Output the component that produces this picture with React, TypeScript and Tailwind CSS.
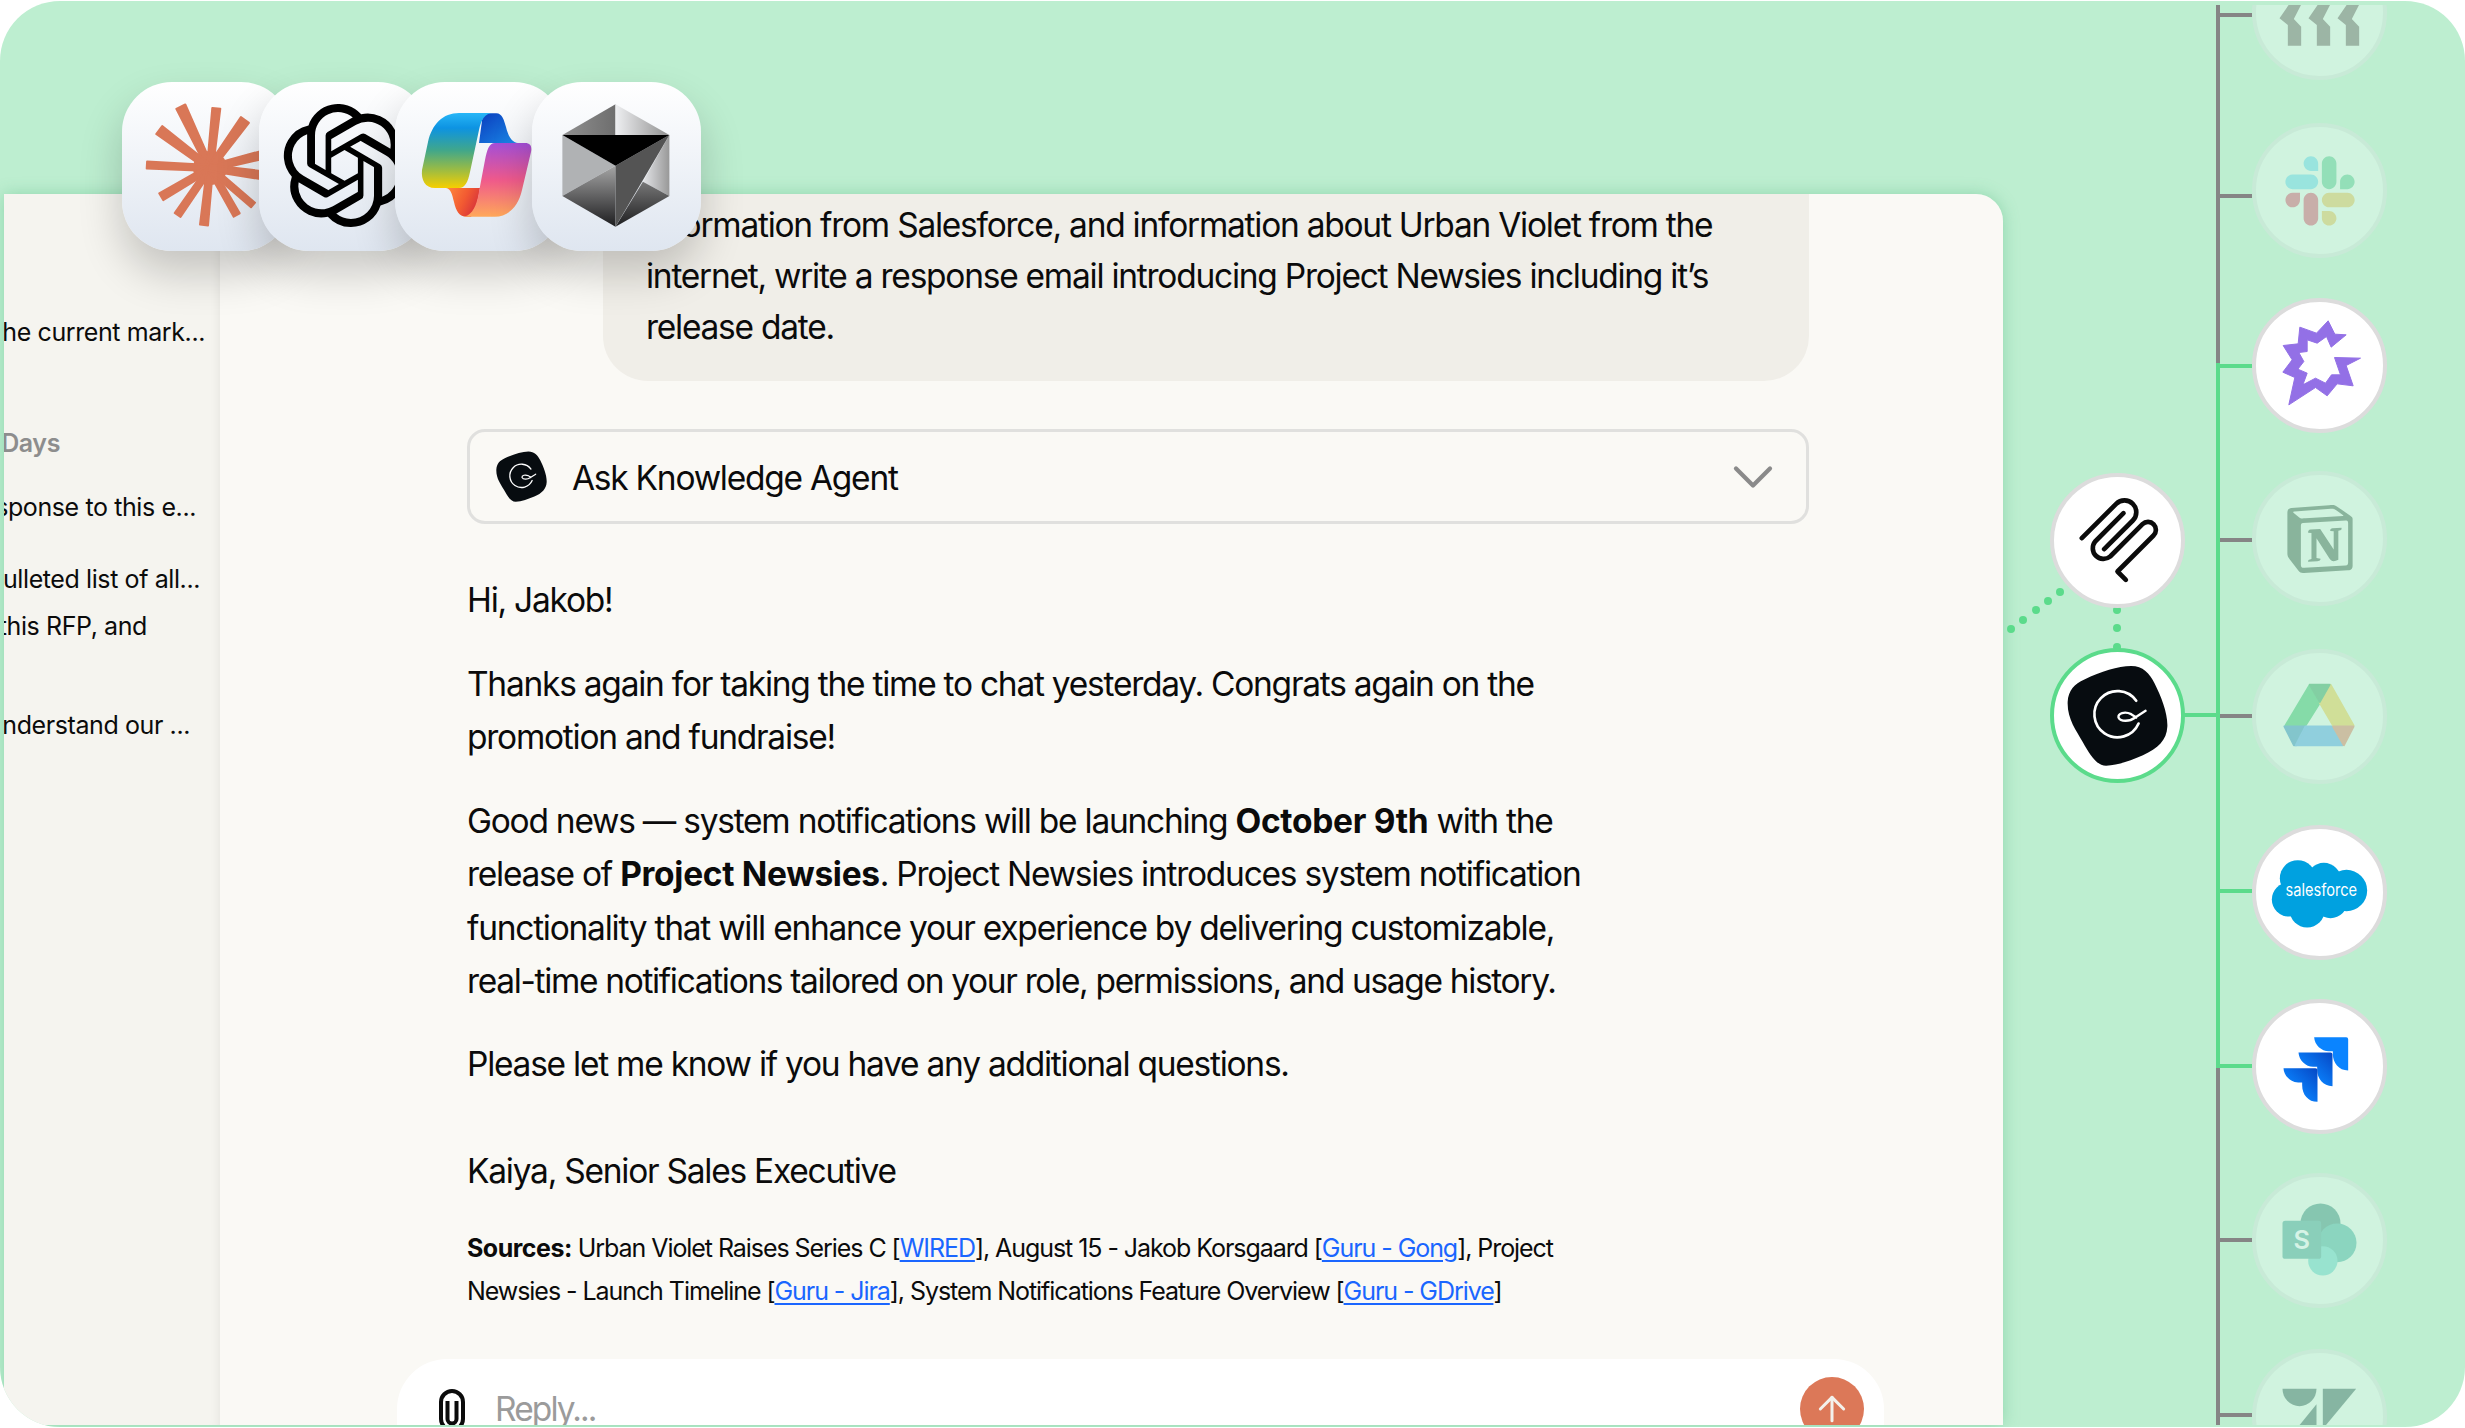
import { ArrowUp, ChevronDown } from "lucide-react";
import { SiNotion, SiOpenai } from "react-icons/si";
import type { ReactNode } from "react";

const font = { fontFamily: "Inter, 'Liberation Sans', sans-serif" };

const rays: [number, number, number][] = [
  [58.8, 24.7, 10], [94.3, 26.3, 8], [122.9, 38, 10], [37.2, 48, 10], [24.9, 83, 7], [39.2, 114.7, 8],
  [55.6, 133, 7], [82, 143, 8], [114.7, 133, 7], [131, 123, 6], [160, 68, 9], [160, 96, 9],
];
const cx = 88;
const cy = 86;
function rayPath(x: number, y: number, w: number) {
  const dx = x - cx;
  const dy = y - cy;
  const l = Math.hypot(dx, dy);
  const nx = -dy / l;
  const ny = dx / l;
  const f = (v: number) => v.toFixed(1);
  return `M${f(cx + nx * 3)} ${f(cy + ny * 3)} L${f(x + (nx * w) / 2)} ${f(y + (ny * w) / 2)} L${f(x - (nx * w) / 2)} ${f(y - (ny * w) / 2)} L${f(cx - nx * 3)} ${f(cy - ny * 3)}Z`;
}

function Tile({ children, first }: { children: ReactNode; first?: boolean }) {
  return (
    <div
      className={`relative h-[169px] w-[169px] shrink-0 overflow-hidden rounded-[50px] bg-linear-to-b from-white to-[#dfe6f0] shadow-[0_22px_44px_rgba(0,0,0,0.2)] ${first ? "" : "-ml-[32.5px]"}`}
    >
      {children}
    </div>
  );
}

function GuruLogo({ className }: { className: string }) {
  return (
    <svg viewBox="318 615 302 302" className={className}>
      <path
        d="M320 725C322 690 340 672 370 658C420 635 470 618 510 618C545 618 565 640 580 670C600 710 620 760 618 800C616 840 590 865 545 885C510 900 470 915 435 916C405 916 385 880 365 845C345 810 318 775 320 725Z"
        fill="#070c10"
      />
      <path d="M525 722A69 69 0 1 0 532 790" fill="none" stroke="#fff" strokeWidth="8" strokeLinecap="round" />
      <path d="M553 752L522 772C505 785 478 785 472 772C470 760 490 752 510 762L525 772" fill="none" stroke="#fff" strokeWidth="7" strokeLinecap="round" />
    </svg>
  );
}

function Node({ faded, green, className, children }: { faded?: boolean; green?: boolean; className: string; children: ReactNode }) {
  const tone = green ? "bg-white border-[#5bdb8b]" : faded ? "bg-[#d0f3df] border-[#c8ead7]" : "bg-white border-[#dcdcdc]";
  return (
    <div className={`absolute flex h-[135px] w-[135px] items-center justify-center rounded-full border-4 ${tone} ${className}`}>{children}</div>
  );
}

function Dot({ className }: { className: string }) {
  return <div className={`absolute h-[8px] w-[8px] rounded-full bg-[#5bdb8b] ${className}`} />;
}

const link = "text-[#1a66ff] underline underline-offset-[3px] decoration-[1.5px]";

export default function App() {
  return (
    <div className="h-[1428px] w-[2465px] overflow-hidden bg-white pt-[1px] text-[#0b0b0b]" style={font}>
      <div className="relative h-[1426px] w-full overflow-hidden rounded-[60px] bg-[#bdeed0] pb-[2px] pl-[4px] pt-[193px]">
        {/* App window */}
        <div className="flex h-[1231px] w-[1999px] overflow-hidden rounded-tr-[27px] shadow-[0_0_16px_rgba(60,170,110,0.35)]">
          {/* Sidebar */}
          <div className="flex w-[216px] shrink-0 flex-col overflow-hidden bg-[#f5f4ef] pt-[121px] text-[25px] leading-[34px] tracking-[-0.4px] shadow-[inset_-10px_0_12px_-10px_rgba(0,0,0,0.08)] whitespace-nowrap">
            <div className="flex justify-end pr-[15px]">Summarize the current mark...</div>
            <div className="mt-[77px] flex justify-end pr-[160px] font-semibold text-[#8d8d8d]">Previous 7 Days</div>
            <div className="mt-[30px] flex justify-end pr-[24px]">Draft a response to this e...</div>
            <div className="mt-[38px] flex justify-end pr-[20px]">Create a bulleted list of all...</div>
            <div className="mt-[13px] flex justify-end pr-[73px]">Summarize this RFP, and</div>
            <div className="mt-[65px] flex justify-end pr-[30px]">Help me understand our ...</div>
          </div>
          {/* Main */}
          <div className="flex min-w-0 flex-1 flex-col overflow-hidden bg-[#faf9f5] pl-[247px]">
            <div className="ml-[136px] h-[187px] w-[1206px] shrink-0 rounded-b-[45px] bg-[#f0eee8] pl-[43px] pt-[6px] text-[33.5px] leading-[51px] tracking-[-1.25px] whitespace-nowrap">
              information from Salesforce, and information about Urban Violet from the
              <br />
              internet, write a response email introducing Project Newsies including it’s
              <br />
              release date.
            </div>
            <div className="mt-[48px] flex h-[95px] w-[1342px] shrink-0 items-center rounded-[18px] border-[3px] border-[#e0e0de] pl-[26px] pr-[19px]">
              <GuruLogo className="h-[51px] w-[51px]" />
              <span className="ml-[25px] flex-1 pt-[3px] text-[33.5px] tracking-[-1.25px]">Ask Knowledge Agent</span>
              <ChevronDown size={68} strokeWidth={1.5} className="text-[#8a8a8a]" />
            </div>
            <div className="mt-[50px] text-[33.5px] leading-[53.5px] tracking-[-1.25px] whitespace-nowrap">
              <p>Hi, Jakob!</p>
              <p className="mt-[30px]">
                Thanks again for taking the time to chat yesterday. Congrats again on the
                <br />
                promotion and fundraise!
              </p>
              <p className="mt-[30px]">
                Good news — system notifications will be launching <b className="font-bold tracking-[-0.3px]">October 9th</b> with the
                <br />
                release of <b className="font-bold tracking-[-0.3px]">Project Newsies</b>. Project Newsies introduces system notification
                <br />
                functionality that will enhance your experience by delivering customizable,
                <br />
                <span className="tracking-[-1.34px]">real-time notifications tailored on your role, permissions, and usage history.</span>
              </p>
              <p className="mt-[29px]">Please let me know if you have any additional questions.</p>
              <p className="mt-[54px]">Kaiya, Senior Sales Executive</p>
            </div>
            <div className="mt-[28px] text-[25px] leading-[43px] tracking-[-1.06px] whitespace-nowrap">
              <b className="font-bold tracking-[-0.5px]">Sources:</b> Urban Violet Raises Series C [<span className={link}>WIRED</span>], August 15 - Jakob Korsgaard [
              <span className={link}>Guru - Gong</span>], Project
              <br />
              Newsies - Launch Timeline [<span className={link}>Guru - Jira</span>], System Notifications Feature Overview [
              <span className={link}>Guru - GDrive</span>]
            </div>
            <div className="-ml-[70px] mt-[46px] flex h-[120px] w-[1487px] shrink-0 items-start rounded-[50px] bg-white pl-[41px] pr-[20px] pt-[18px]">
              <svg viewBox="0 0 28 48" className="mt-[12px] h-[48px] w-[28px]" fill="none" stroke="#0b0b0b" strokeWidth="4">
                <path d="M3 13a11 11 0 0 1 22 0V30a11 11 0 0 1-22 0Z" />
                <path d="M9.5 12V30a4.5 4.5 0 0 0 9 0V12" />
              </svg>
              <span className="ml-[29px] mt-[9px] flex-1 text-[33.5px] leading-[46px] tracking-[-1.9px] text-[#9b9b9b]">Reply...</span>
              <div className="flex h-[64px] w-[64px] items-center justify-center rounded-full bg-[#dc7858]">
                <ArrowUp size={40} strokeWidth={1.8} className="text-[#f3f1ec]" />
              </div>
            </div>
          </div>
        </div>

        {/* Model tiles */}
        <div className="absolute left-[122px] top-[81px] flex">
          <Tile first>
            <svg viewBox="0 0 169 169" className="h-full w-full">
              <circle cx={cx} cy={cy} r="17" fill="#d97757" />
              {rays.map(([x, y, w]) => (
                <path key={`${x}-${y}`} d={rayPath(x, y, w)} fill="#d97757" stroke="#d97757" strokeWidth="2" strokeLinejoin="round" />
              ))}
            </svg>
          </Tile>
          <Tile>
            <div className="absolute left-[24px] top-[22px]">
              <SiOpenai size={123} color="#000" />
            </div>
          </Tile>
          <Tile>
            <svg viewBox="0 0 169 169" className="h-full w-full">
              <defs>
                <linearGradient id="cpA" x1="0" y1="0" x2="0" y2="1">
                  <stop offset="0" stopColor="#27b6f7" />
                  <stop offset="0.2" stopColor="#0d93e2" />
                  <stop offset="0.5" stopColor="#41a78a" />
                  <stop offset="0.75" stopColor="#99bb45" />
                  <stop offset="1" stopColor="#f6cf00" />
                </linearGradient>
                <linearGradient id="cpB" x1="0" y1="0" x2="1" y2="1">
                  <stop offset="0" stopColor="#0a3cbd" />
                  <stop offset="1" stopColor="#1b8ae8" />
                </linearGradient>
                <linearGradient id="cpC" x1="0" y1="0" x2="0" y2="1">
                  <stop offset="0" stopColor="#a44fd8" />
                  <stop offset="0.5" stopColor="#f05a8c" />
                  <stop offset="1" stopColor="#ffa85a" />
                </linearGradient>
                <linearGradient id="cpD" x1="0" y1="0" x2="1" y2="0.4">
                  <stop offset="0" stopColor="#ff8a3a" />
                  <stop offset="0.6" stopColor="#f25a32" />
                  <stop offset="1" stopColor="#d9353a" />
                </linearGradient>
              </defs>
              <path d="M88 31.3H101C107 31 109 38 111 45C113 53 116 60 123 61H84Z" fill="url(#cpB)" />
              <path d="M51 106H72L85 106L84 112C82 122 80 130 76 134.7H72C64 134.7 61 129 59 120C57 112 56 107 51 106Z" fill="url(#cpD)" />
              <path d="M64 31H98C90 31 86 38 84 48L75 90C73 100 70 106 64 106H40C30 106 26 98 27 88L33 60C37 42 48 31 64 31Z" fill="url(#cpA)" />
              <path d="M100 61H130C136 61 137 65 136 70L127 108C123 126 112 134.7 100 134.7H68C75 134 80 128 83 115L90 78C92 68 94 61 100 61Z" fill="url(#cpC)" />
            </svg>
          </Tile>
          <Tile>
            <svg viewBox="0 0 169 169" className="h-full w-full">
              <defs>
                <linearGradient id="gA" x1="0" y1="0" x2="1" y2="0">
                  <stop offset="0" stopColor="#909090" />
                  <stop offset="1" stopColor="#6e6e6e" />
                </linearGradient>
                <linearGradient id="gB" x1="0" y1="0" x2="1" y2="0">
                  <stop offset="0" stopColor="#eeeff1" />
                  <stop offset="1" stopColor="#8f8f8f" />
                </linearGradient>
                <linearGradient id="gC" x1="0" y1="0" x2="0" y2="1">
                  <stop offset="0" stopColor="#a5a5a5" />
                  <stop offset="1" stopColor="#1d1d1f" />
                </linearGradient>
                <linearGradient id="gD" x1="0" y1="0" x2="1" y2="0">
                  <stop offset="0" stopColor="#e4e5e8" />
                  <stop offset="1" stopColor="#989898" />
                </linearGradient>
                <linearGradient id="gE" x1="0" y1="0" x2="0" y2="1">
                  <stop offset="0" stopColor="#777" />
                  <stop offset="1" stopColor="#1e1e20" />
                </linearGradient>
              </defs>
              <polygon points="83.5,22.3 30.4,53 83.5,53" fill="url(#gA)" />
              <polygon points="83.5,22.3 137.4,53 83.5,53" fill="url(#gB)" />
              <polygon points="30.4,53 83.5,83.7 30.4,114" fill="#b0b2b4" />
              <polygon points="30.4,114 83.5,83.7 83.5,144.7" fill="url(#gC)" />
              <polygon points="137.4,53 110.9,99.7 137.4,114" fill="url(#gD)" />
              <polygon points="110.9,99.7 137.4,114 83.5,144.7" fill="url(#gE)" />
              <polygon points="83.5,83.7 137.4,53 83.5,144.7" fill="#545454" />
              <polygon points="30.4,53 137.4,53 83.5,83.7" fill="#000" />
            </svg>
          </Tile>
        </div>

        {/* Integration tree */}
        <div className="absolute bottom-[2px] left-0 right-0 top-[4px] overflow-hidden">
          <div className="absolute left-[2216px] top-0 h-[358px] w-[4px] bg-[#858585]" />
          <div className="absolute left-[2216px] top-[358px] h-[705px] w-[4px] bg-[#5bdb8b]" />
          <div className="absolute left-[2216px] top-[1063px] h-[358px] w-[4px] bg-[#858585]" />

          <div className="absolute left-[2220px] top-[8px] h-[4px] w-[32px] bg-[#858585]" />
          <div className="absolute left-[2220px] top-[189px] h-[4px] w-[32px] bg-[#858585]" />
          <div className="absolute left-[2216px] top-[359px] h-[4px] w-[36px] bg-[#5bdb8b]" />
          <div className="absolute left-[2220px] top-[533px] h-[4px] w-[32px] bg-[#858585]" />
          <div className="absolute left-[2220px] top-[709px] h-[4px] w-[32px] bg-[#858585]" />
          <div className="absolute left-[2216px] top-[884px] h-[4px] w-[36px] bg-[#5bdb8b]" />
          <div className="absolute left-[2216px] top-[1059px] h-[4px] w-[36px] bg-[#5bdb8b]" />
          <div className="absolute left-[2220px] top-[1233px] h-[4px] w-[32px] bg-[#858585]" />
          <div className="absolute left-[2220px] top-[1408px] h-[4px] w-[32px] bg-[#858585]" />
          <div className="absolute left-[2184px] top-[708px] h-[4px] w-[32px] bg-[#5bdb8b]" />

          <Dot className="left-[2007px] top-[620px]" />
          <Dot className="left-[2019px] top-[611px]" />
          <Dot className="left-[2032px] top-[601px]" />
          <Dot className="left-[2044px] top-[592px]" />
          <Dot className="left-[2056px] top-[583px]" />
          <Dot className="left-[2113px] top-[601px]" />
          <Dot className="left-[2113px] top-[619px]" />
          <Dot className="left-[2113px] top-[638px]" />

          {/* Chevrons */}
          <Node faded className="left-[2252px] top-[-60px]">
            <svg viewBox="886.5 -153 381 381" className="h-[127px] w-[127px]" fill="#9cb5a5">
              <path d="M1022 14H985L957 55L982 75V137H1022V80L1000 57Z" />
              <path d="M1109 14H1072L1044 55L1069 75V137H1109V80L1087 57Z" />
              <path d="M1196 14H1159L1131 55L1156 75V137H1196V80L1174 57Z" />
            </svg>
          </Node>
          {/* Slack */}
          <Node faded className="left-[2252px] top-[118px]">
            <svg viewBox="0 0 127 127" className="h-[70px] w-[70px]">
              <path fill="#c8aea9" d="M27.2 80c0 7.3-5.9 13.2-13.2 13.2C6.7 93.2.8 87.3.8 80c0-7.3 5.9-13.2 13.2-13.2h13.2V80zm6.6 0c0-7.3 5.9-13.2 13.2-13.2 7.3 0 13.2 5.9 13.2 13.2v33c0 7.3-5.9 13.2-13.2 13.2-7.3 0-13.2-5.9-13.2-13.2V80z" />
              <path fill="#99e4de" d="M47 27c-7.3 0-13.2-5.9-13.2-13.2C33.8 6.5 39.7.6 47 .6c7.3 0 13.2 5.9 13.2 13.2V27H47zm0 6.7c7.3 0 13.2 5.9 13.2 13.2 0 7.3-5.9 13.2-13.2 13.2H13.9C6.6 60.1.7 54.2.7 46.9c0-7.3 5.9-13.2 13.2-13.2H47z" />
              <path fill="#93dfb8" d="M99.9 46.9c0-7.3 5.9-13.2 13.2-13.2 7.3 0 13.2 5.9 13.2 13.2 0 7.3-5.9 13.2-13.2 13.2H99.9V46.9zm-6.6 0c0 7.3-5.9 13.2-13.2 13.2-7.3 0-13.2-5.9-13.2-13.2V13.8C66.9 6.5 72.8.6 80.1.6c7.3 0 13.2 5.9 13.2 13.2v33.1z" />
              <path fill="#cddb9f" d="M80.1 99.8c7.3 0 13.2 5.9 13.2 13.2 0 7.3-5.9 13.2-13.2 13.2-7.3 0-13.2-5.9-13.2-13.2V99.8h13.2zm0-6.6c-7.3 0-13.2-5.9-13.2-13.2 0-7.3 5.9-13.2 13.2-13.2h33.1c7.3 0 13.2 5.9 13.2 13.2 0 7.3-5.9 13.2-13.2 13.2H80.1z" />
            </svg>
          </Node>
          {/* Gong */}
          <Node className="left-[2252px] top-[293px]">
            <svg viewBox="886.5 906.5 381 381" className="h-[127px] w-[127px]">
              <path
                fill="#9370e6"
                strokeLinejoin="round"
                stroke="#9370e6"
                strokeWidth="3"
                d="M1103 963L1123 1003L1157 1005L1112 1042L1098 1010L1070 1030L1040 1020L1040 1055L1015 1058L1030 1085L1012 1108L1040 1120L1027 1155L1065 1135L1095 1150L1113 1125L1140 1125L1122 1073L1200 1075L1157 1097L1178 1158L1130 1152L1100 1188L1065 1163L985 1215L1003 1133L967 1117L995 1080L968 1037L1013 1032L1018 982L1068 1000Z"
              />
            </svg>
          </Node>
          {/* Notion */}
          <Node faded className="left-[2252px] top-[466px]">
            <SiNotion size={68} color="#89b49c" />
          </Node>
          {/* Drive */}
          <Node faded className="left-[2252px] top-[644px]">
            <svg viewBox="886.5 577.5 381 381" className="h-[127px] w-[127px]" strokeLinejoin="round" strokeWidth="6">
              <polygon points="1048,673 1078,727 1035,795 975,795" fill="#85dba8" stroke="#85dba8" />
              <polygon points="972,798 1035,798 1006,854 1000,854" fill="#83c5cc" stroke="#83c5cc" />
              <polygon points="1035,798 1118,798 1147,854 1006,854" fill="#90cfdd" stroke="#90cfdd" />
              <polygon points="1110,673 1179,795 1118,795 1078,727" fill="#d0df98" stroke="#d0df98" />
              <polygon points="1118,798 1179,798 1150,854" fill="#cbbfa3" stroke="#cbbfa3" />
              <polygon points="1048,673 1107,673 1078,724" fill="#83cfa3" stroke="#83cfa3" />
            </svg>
          </Node>
          {/* Salesforce */}
          <Node className="left-[2252px] top-[820px]">
            <svg viewBox="886.5 1102.5 381 381" className="h-[127px] w-[127px]" fill="#00a1e0">
              <circle cx="1012" cy="1250" r="54" />
              <circle cx="1090" cy="1256" r="52" />
              <circle cx="1158" cy="1287" r="62" />
              <circle cx="985" cy="1314" r="51" />
              <circle cx="1040" cy="1345" r="53" />
              <circle cx="1110" cy="1318" r="52" />
              <text x="975" y="1303" fill="#fff" fontSize="50" textLength="215" lengthAdjust="spacingAndGlyphs" style={font}>salesforce</text>
            </svg>
          </Node>
          {/* Jira */}
          <Node className="left-[2252px] top-[994px]">
            <svg viewBox="886.5 159.5 381 381" className="h-[127px] w-[127px]">
              <defs>
                <linearGradient id="jr" x1="1" y1="0" x2="0.3" y2="0.7">
                  <stop offset="0" stopColor="#0647c4" />
                  <stop offset="1" stopColor="#0a84ff" />
                </linearGradient>
              </defs>
              <path fill="#0a84ff" d="M1061 262H1157Q1163 262 1163 268V362C1135 362 1117 340 1117 312V304H1105C1083 304 1062 285 1061 262Z" />
              <path fill="url(#jr)" d="M1014 308H1110Q1116 308 1116 314V409C1088 409 1070 387 1070 359V351H1058C1036 351 1015 331 1014 308Z" />
              <path fill="url(#jr)" d="M969 355H1065Q1071 355 1071 361V456C1043 456 1025 434 1025 406V398H1013C991 398 970 378 969 355Z" />
            </svg>
          </Node>
          {/* SharePoint */}
          <Node faded className="left-[2252px] top-[1168px]">
            <svg viewBox="886.5 680.5 381 381" className="h-[127px] w-[127px]">
              <circle cx="1080" cy="820" r="60" fill="#86c6b0" />
              <circle cx="1130" cy="878" r="58" fill="#8bd5bf" />
              <circle cx="1087" cy="932" r="44" fill="#98e3cf" />
              <rect x="966" y="812" width="116" height="114" rx="8" fill="#8acfba" />
              <text x="1024" y="897" textAnchor="middle" fill="#d6f3e6" fontSize="76" fontWeight="600" style={font}>S</text>
            </svg>
          </Node>
          {/* Zendesk */}
          <Node faded className="left-[2252px] top-[1344px]">
            <svg viewBox="886.5 1204.5 381 381" className="h-[127px] w-[127px]" fill="#86b5a2">
              <path d="M966 1312H1068A51 52 0 0 1 966 1312Z" />
              <path d="M1087 1312H1187L1087 1432Z" />
              <path d="M1068 1358V1432H1008Z" />
            </svg>
          </Node>
          {/* Paperclip agent */}
          <Node className="left-[2050px] top-[468px]">
            <svg viewBox="281.5 51.5 381 381" className="h-[127px] w-[127px]" fill="none" stroke="#0b0b0b" strokeWidth="14" strokeLinecap="round" strokeLinejoin="round">
              <path d="M365 235L468 132A35 35 0 0 1 518 182L432 268" />
              <path d="M490 160L405 245A32 32 0 0 0 450 290L547 193A23 23 0 0 1 580 227L472 335L497 360" />
            </svg>
          </Node>
          {/* Guru */}
          <Node green className="left-[2050px] top-[643px]">
            <GuruLogo className="h-[101px] w-[101px]" />
          </Node>
        </div>
      </div>
    </div>
  );
}
